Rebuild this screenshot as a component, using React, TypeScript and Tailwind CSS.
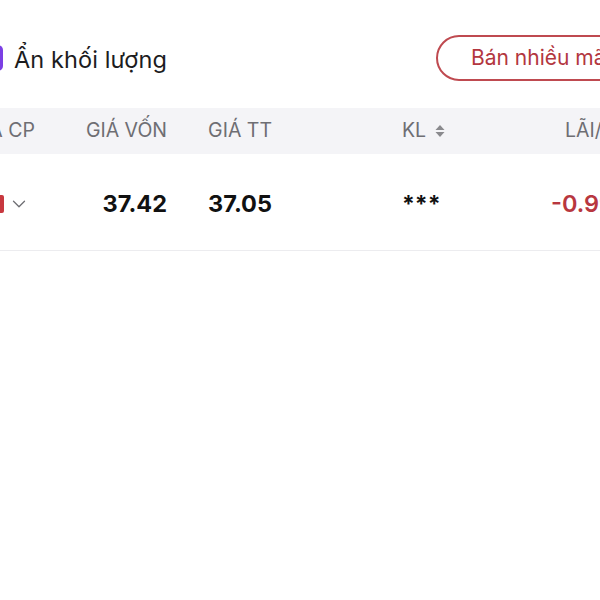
import { ChevronDown } from "lucide-react"

const font = { fontFamily: "Inter, 'Noto Sans', sans-serif" }

function SortIcon() {
  return (
    <svg width="12" height="14" viewBox="0 0 12 14" className="ml-[8px]">
      <path d="M6 1 L10.5 6 H1.5 Z" fill="#8a8a8e" />
      <path d="M6 13 L10.5 8 H1.5 Z" fill="#8a8a8e" />
    </svg>
  )
}

export default function App() {
  return (
    <div className="w-[600px] h-[600px] bg-white overflow-hidden" style={font}>
      {/* top bar */}
      <div className="flex items-center justify-between pt-[35px] pb-[27px]">
        <label className="flex items-center gap-[11px] -ml-[23px]">
          <span className="w-[26px] h-[26px] rounded-[5px] bg-[#7b3fe4] shrink-0" />
          <span className="text-[23.5px] tracking-[0.1px] text-[#1c1c1e] pt-[3px]">Ẩn khối lượng</span>
        </label>
        <button
          type="button"
          className="w-[200px] shrink-0 h-[46px] -mr-[36px] pl-[33px] text-left rounded-full border-2 border-[#bf4a50] text-[21px] text-[#b3373f] whitespace-nowrap"
        >
          Bán nhiều mã
        </button>
      </div>

      {/* table header */}
      <div className="flex items-center h-[46px] bg-[#f4f4f7] text-[19.5px] text-[#6e6e73] whitespace-nowrap -ml-[60px]">
        <div className="w-[95px] shrink-0 flex justify-end">MÃ CP</div>
        <div className="w-[132px] shrink-0 flex justify-end">GIÁ VỐN</div>
        <div className="w-[105px] shrink-0 flex justify-end">GIÁ TT</div>
        <div className="w-[250px] shrink-0 flex items-center pl-[130px]">
          KL
          <SortIcon />
        </div>
        <div className="w-[120px] shrink-0 pl-[43px]">LÃI/LỖ</div>
      </div>

      {/* data row */}
      <div className="flex items-center h-[97px] pt-[3px] border-b border-[#ececef] whitespace-nowrap -ml-[60px]">
        <div className="w-[95px] shrink-0 flex items-center justify-end">
          <span className="w-[36px] h-[18px] bg-[#c8383f] rounded-[2px] shrink-0" />
          <ChevronDown size={22} strokeWidth={1.4} className="ml-[4px] mr-[5px] text-[#6e6e73] shrink-0" />
        </div>
        <div className="w-[132px] shrink-0 flex justify-end text-[23.5px] font-bold text-[#111]">37.42</div>
        <div className="w-[105px] shrink-0 flex justify-end text-[23.5px] font-bold text-[#111]">37.05</div>
        <div className="w-[250px] shrink-0 pl-[130px] text-[23px] font-bold text-[#111] pt-[2px]">***</div>
        <div className="w-[120px] shrink-0 pl-[29px] text-[23.5px] font-semibold text-[#b8373f]">-0.99%</div>
      </div>
    </div>
  )
}
